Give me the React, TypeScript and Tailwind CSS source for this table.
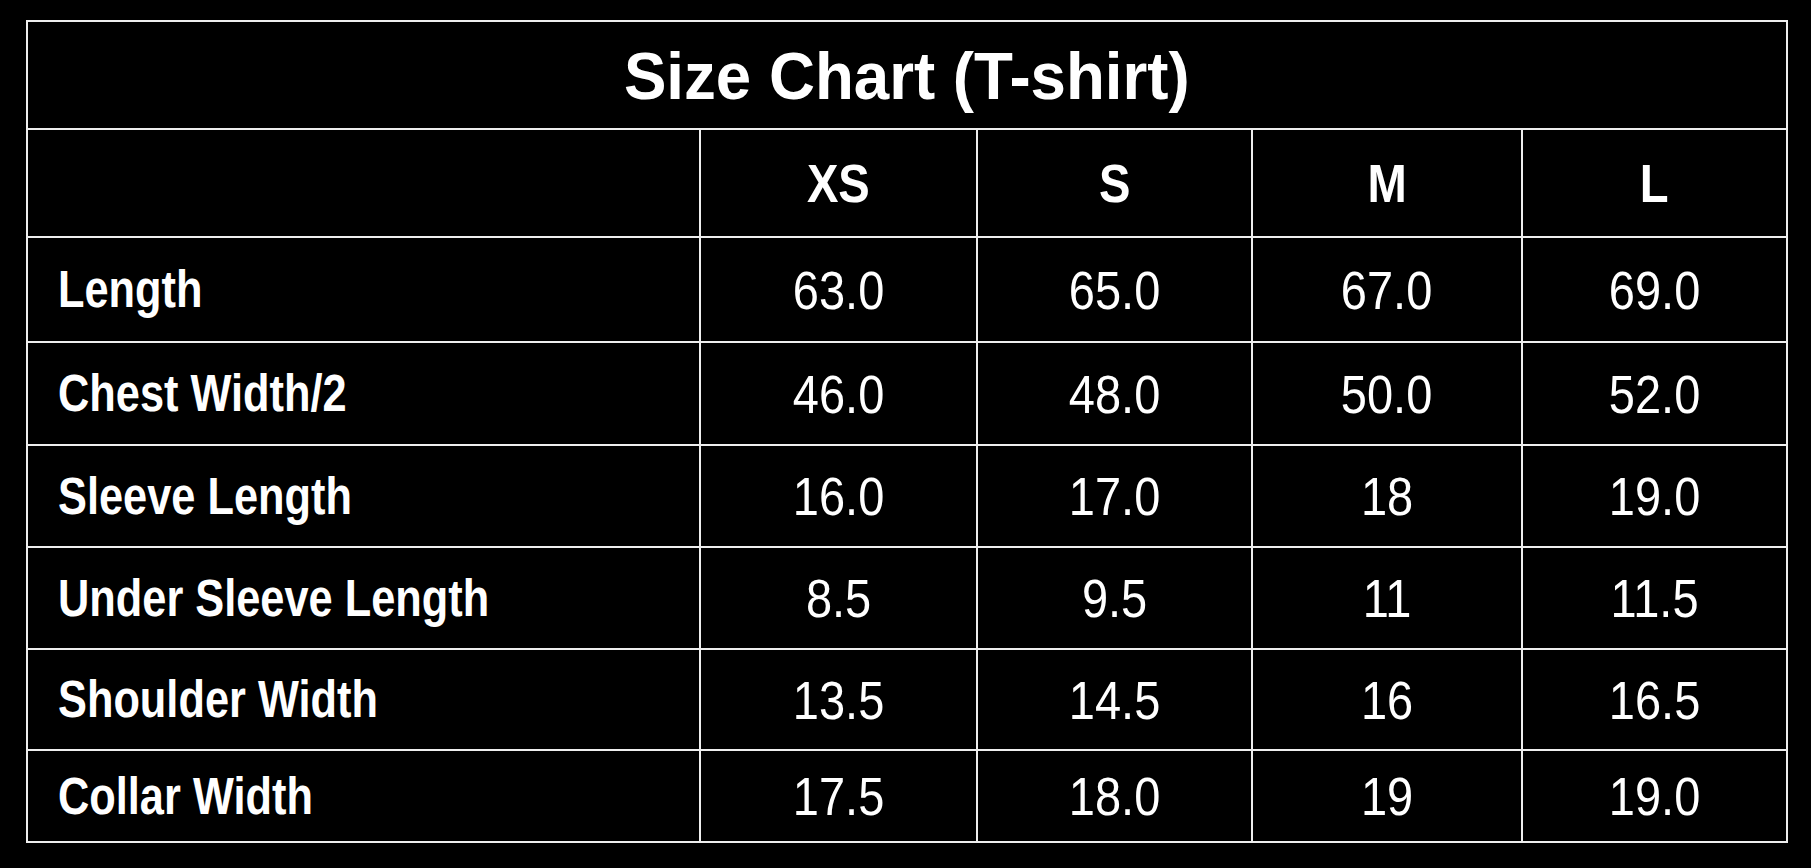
import React from 'react';

const sizes = ['XS', 'S', 'M', 'L'];

const rows: { label: string; values: string[]; h: string }[] = [
  { label: 'Length', values: ['63.0', '65.0', '67.0', '69.0'], h: 'h-[103px]' },
  { label: 'Chest Width/2', values: ['46.0', '48.0', '50.0', '52.0'], h: 'h-[101px]' },
  { label: 'Sleeve Length', values: ['16.0', '17.0', '18', '19.0'], h: 'h-[100px]' },
  { label: 'Under Sleeve Length', values: ['8.5', '9.5', '11', '11.5'], h: 'h-[100px]' },
  { label: 'Shoulder Width', values: ['13.5', '14.5', '16', '16.5'], h: 'h-[99px]' },
  { label: 'Collar Width', values: ['17.5', '18.0', '19', '19.0'], h: 'h-[90px]' },
];

const font = "font-['Liberation_Sans',Arial,sans-serif]";

const App: React.FC = () => {
  return (
    <div className={`min-h-screen bg-black pl-[26px] pt-[20px] text-white ${font}`}>
      <div className="grid w-[1762px] grid-cols-[671px_275px_273px_268px_263px] gap-[2px] bg-[#eeeeee] p-[2px]">
        {/* Title */}
        <div className="col-span-5 flex h-[106px] items-center justify-center bg-black">
          <span className="inline-block scale-x-[0.95] text-[67px] font-bold leading-none">Size Chart (T-shirt)</span>
        </div>

        {/* Size header */}
        <div className="h-[106px] bg-black" />
        {sizes.map((s) => (
          <div key={s} className="flex h-[106px] items-center justify-center bg-black">
            <span className="inline-block scale-x-[0.89] text-[53px] font-bold leading-none">{s}</span>
          </div>
        ))}

        {/* Measurements */}
        {rows.map((r) => (
          <React.Fragment key={r.label}>
            <div className={`flex ${r.h} items-center bg-black pl-[30px]`}>
              <span className="inline-block origin-left scale-x-[0.85] whitespace-nowrap text-[51px] font-bold leading-none">
                {r.label}
              </span>
            </div>
            {r.values.map((v, i) => (
              <div key={i} className={`flex ${r.h} items-center justify-center bg-black`}>
                <span className="inline-block scale-x-[0.87] text-[54px] leading-none">{v}</span>
              </div>
            ))}
          </React.Fragment>
        ))}
      </div>
    </div>
  );
};

export default App;
